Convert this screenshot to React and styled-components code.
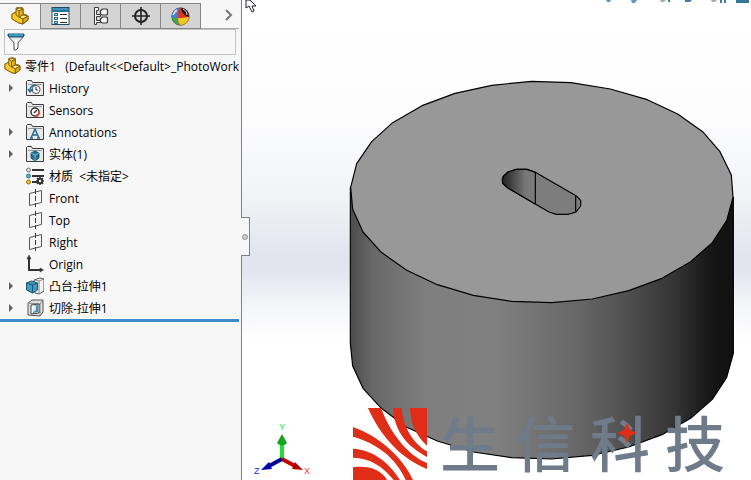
import React from 'react'
import styled, { createGlobalStyle } from 'styled-components'

const line = '#3c3c3c'

const GlobalStyle = createGlobalStyle`
  * {
    box-sizing: border-box;
  }
  body {
    margin: 0;
    overflow: hidden;
    font-family: 'Open Sans', 'Noto Sans CJK SC', sans-serif;
    font-size: 12px;
    color: #000;
  }
`

const Window = styled.main`
  display: flex;
  min-height: 100vh;
`

const Panel = styled.aside`
  position: relative;
  z-index: 1;
  flex: 0 0 242px;
  min-width: 0;
  padding: 3px 2px 0 0;
  border-right: 1px solid #808080;
  background: #f7f7f7;
`

const Tabs = styled.nav`
  display: flex;
  height: 26px;
`

const Tab = styled.button`
  display: flex;
  align-items: center;
  justify-content: center;
  width: ${p => (p.$last ? '41px' : '40px')};
  padding: 0;
  border: 1px solid #858585;
  border-left-width: ${p => (p.$active ? '0' : '1px')};
  border-right-width: ${p => (p.$last ? '1px' : '0')};
  border-bottom-color: ${p => (p.$active ? '#f7f7f7' : '#858585')};
  background: ${p => (p.$active ? '#f7f7f7' : '#d4d4d4')};
`

const More = styled.button`
  display: flex;
  flex: 1;
  align-items: center;
  justify-content: flex-end;
  padding: 0 6px 2px 0;
  border: 0;
  border-bottom: 1px solid #a8a8a8;
  background: none;
`

const Filter = styled.label`
  display: flex;
  align-items: center;
  height: 26px;
  margin: 0 3px 0 4px;
  padding-left: 2px;
  border: 1px solid #c2c2c2;
`

const FilterInput = styled.input`
  flex: 1;
  min-width: 0;
  border: 0;
  outline: 0;
  background: none;
  font: inherit;
`

const Tree = styled.ul`
  margin: 0;
  padding: 0;
  border-bottom: 3px solid #3a8cc6;
  list-style: none;
`

const Row = styled.li`
  display: flex;
  align-items: center;
  height: 22px;
  padding-left: 4px;
  overflow: hidden;
  white-space: pre;
`

const Toggle = styled.button`
  display: flex;
  align-items: center;
  flex: 0 0 22px;
  height: 22px;
  padding: 0 0 0 4px;
  border: 0;
  background: none;
`

const Spacer = styled.span`
  flex: 0 0 22px;
`

const Label = styled.span`
  margin-left: ${p => (p.$root ? '4px' : '5px')};
`

const Handle = styled.button`
  position: absolute;
  top: 217px;
  right: -9px;
  display: flex;
  align-items: center;
  justify-content: center;
  width: 9px;
  height: 39px;
  padding: 0;
  border: 1px solid #808080;
  border-left: 0;
  background: #f7f7f7;
`

const Dot = styled.span`
  flex: 0 0 6px;
  height: 6px;
  border: 1px solid #999;
  border-radius: 50%;
  background: #ccc;
`

const Viewport = styled.section`
  position: relative;
  flex: 1;
  min-width: 0;
  overflow: hidden;
  background: linear-gradient(#fff 0%, #fdfdfe 25%, #f0f2f6 42%, #e2e5ee 53%, #e2e5ee 56%, #f5f6fa 64%, #fff 71%);
`

const Scene = styled.svg`
  position: absolute;
  inset: 0;
  width: 100%;
  height: 100%;
`

const Triad = styled.svg`
  position: absolute;
  left: 8px;
  bottom: 0;
`

const Pointer = styled.svg`
  position: absolute;
  left: 3px;
  top: 0;
`

const ViewTools = styled.svg`
  position: absolute;
  right: 0;
  top: 0;
`

const Watermark = styled.div`
  position: absolute;
  right: 26px;
  bottom: 0;
  display: flex;
  height: 72px;
`

const Company = styled.div`
  display: flex;
  gap: 15px;
  margin-left: 13px;
  color: #707b8a;
  font-family: Lato, 'Noto Sans CJK SC', sans-serif;
  font-size: 60px;
  font-weight: 500;
  line-height: 72px;
`

const Glyph = styled.span`
  position: relative;
`

const Star = styled.svg`
  position: absolute;
  left: 27px;
  top: 15px;
`

const PartIcon = () => (
  <svg width="18" height="18" viewBox="0 0 18 18" stroke="#7a5a0c" strokeWidth=".9" strokeLinejoin="round">
    <path d="M1 7l4-2v-4l4-1 3 1v6l4 1 1 1v4l-5 4-4-1-7-4z" fill="#f3c22b" />
    <path d="M5 2l4-1 3 1-4 2z" fill="#ffe681" />
    <path d="M8 4l4-2v6l-4 2z" fill="#e5b11e" />
    <path d="M1 7l4-2v3l3 2 4 2v5l-4-1-7-4z" fill="#fbc926" />
    <path d="M8 10l4-2 5 1-5 3z" fill="#ffe681" />
    <path d="M12 12l5-3v4l-5 4z" fill="#dda51b" />
  </svg>
)

const PropertyIcon = () => (
  <svg width="19" height="18" viewBox="0 0 19 18">
    <rect x="1" y=".5" width="17" height="17" fill="#fff" stroke="#28465a" />
    <path d="M1 1h17v4H1z" fill="#237198" />
    <path d="M2 2h15" stroke="#65b3d4" />
    <path d="M3 6h4v3H3zM3 10h4v3H3zM3 14h4v3H3z" fill="#286e92" />
    <path d="M4 7.5h2M4 11.5h2M4 15.5h2" stroke="#b9dfee" />
    <path d="M9 7.5h7M9 11.5h7M9 15.5h7" stroke="#333" />
  </svg>
)

const ConfigIcon = () => (
  <svg width="16" height="18" viewBox="0 0 16 18" fill="#f5f5f5" stroke={line} strokeLinejoin="round">
    <path d="M1.500 .5h4v3h-2v4h4v2h-4v4h4v2h-4v2h-2z" />
    <path d="M7.500 4l2-2h4l1 1v4l-1 1h-4l-2-1zM7.500 12l2-2h4l1 1v4l-1 1h-4l-2-1z" strokeWidth="1.200" />
  </svg>
)

const TargetIcon = () => (
  <svg width="18" height="18" viewBox="0 0 18 18" fill="none" stroke="#222" strokeWidth="2">
    <circle cx="9" cy="9" r="6" />
    <path d="M9 0v18M0 9h18" strokeWidth="1.6" />
  </svg>
)

const AppearanceIcon = () => (
  <svg width="19" height="19" viewBox="0 0 19 19">
    <clipPath id="ball">
      <circle cx="9.500" cy="9.500" r="9" />
    </clipPath>
    <g clipPath="url(#ball)">
      <path d="M0 0h19v19H0z" fill="#e03428" />
      <path d="M0 11C0 4 4 0 10 0 7 3 6 6 7 11z" fill="#3d85d8" />
      <path d="M0 10c3 1 5 1 7 1 0 3 1 6 3 8H0z" fill="#3fa84f" />
      <path d="M7 11c4 0 8 0 12-2v10h-9c-2-2-3-5-3-8z" fill="#f4c61f" />
      <path d="M10 1c5-1 8 4 8 9-4-1-8-4-8-9z" fill="#231718" />
      <path d="M12 2c2 1 4 3 4 6" stroke="#e8e8e8" fill="none" />
      <path d="M2 8c1-3 2-4 4-5" stroke="#c4e0ff" strokeWidth="2" fill="none" />
    </g>
    <circle cx="9.500" cy="9.500" r="8.700" fill="none" stroke="#555" strokeOpacity=".500" />
  </svg>
)

const FunnelIcon = () => (
  <svg width="18" height="18" viewBox="0 0 18 18">
    <path d="M1 3l6 7v7h2l2-2v-5l6-7z" fill="#e8e8e8" stroke="#555" />
    <path d="M9 7v9" stroke="#fff" strokeWidth="2" />
    <path d="M1 1h16v2l-1 1H2L1 3z" fill="#2381a8" stroke="#1a5875" />
    <path d="M2 2h14" stroke="#64bad8" />
  </svg>
)

const folderMarks = {
  history: (
    <g fill="none" stroke="#2a6a8e">
      <circle cx="10" cy="10.500" r="4" fill="#fff" stroke="#555" />
      <path d="M4 12c0-4 2-6 6-6M2 10l2 3 3-3" strokeWidth="1.400" />
      <path d="M10 8v3h2" stroke="#333" />
    </g>
  ),
  sensor: (
    <g fill="none" stroke="#333">
      <circle cx="9" cy="11" r="4" fill="#fff" strokeWidth="1.500" />
      <path d="M13 10a4 4 0 0 1-4 5" stroke="#e0432b" strokeWidth="2" />
      <path d="M8 12l3-3" strokeWidth="1.500" />
    </g>
  ),
  annotation: (
    <path d="M5 15l4-9 4 9M6 12h6M4 15h3M11 15h3" fill="none" stroke="#286b91" strokeWidth="1.500" />
  ),
  body: (
    <g fill="#257194" stroke="#123f57" strokeWidth=".800">
      <path d="M5 8l4-2 4 2v5l-4 3-4-3z" />
      <path d="M5 8l4 2 4-2M9 10v6" fill="none" stroke="#8ec6dd" />
    </g>
  ),
}

const FolderIcon = ({ mark }) => (
  <svg width="18" height="18" viewBox="0 0 18 18">
    <path d="M.5 16.500v-14l1-1h4l1 2h11v13z" fill="#e9e9e9" stroke={line} />
    <path d="M2 5.500h14" stroke="#999" />
    {folderMarks[mark]}
  </svg>
)

const MaterialIcon = () => (
  <svg width="18" height="18" viewBox="0 0 18 18" stroke="#333">
    <path d="M6 3h12M6 9h12M6 15h5" strokeWidth="2" />
    <circle cx="2.500" cy="3" r="2" fill="#ddd" stroke="#777" />
    <circle cx="2.500" cy="9" r="2" fill="#56b2dc" stroke="#37718b" />
    <circle cx="2.500" cy="15" r="2" fill="#f3c321" stroke="#967512" />
    <circle cx="14" cy="14" r="2.200" fill="none" strokeWidth="2" />
    <path d="M14 10v1.500M14 16.500V18M10 14h1.500M16.500 14H18M11 11l1 1M16 16l1 1M17 11l-1 1M11 17l1-1" strokeWidth="1.500" />
  </svg>
)

const PlaneIcon = () => (
  <svg width="18" height="18" viewBox="0 0 18 18" fill="none" stroke="#555">
    <path d="M3.500 4.500l12-3v12l-12 3z" />
    <path d="M9.500 0v18" strokeDasharray="5 2" stroke={line} />
  </svg>
)

const OriginIcon = () => (
  <svg width="18" height="18" viewBox="0 0 18 18" fill="#333" stroke="#333">
    <path d="M3 3v12h12" fill="none" strokeWidth="2" />
    <path d="M1 4l2-4 2 4zM14 13l3.500 2-3.500 2z" strokeWidth=".500" />
  </svg>
)

const ExtrudeIcon = () => (
  <svg width="18" height="18" viewBox="0 0 18 18" strokeLinejoin="round">
    <path d="M8 3l6-2 4 1v12l-5 3-4-1z" fill="#f4f4f4" stroke="#555" />
    <path d="M13 4l5-2M13 4v13M9 3l4 1" stroke="#888" />
    <path d="M.500 6l5-2 6 2v7l-5 3-6-3z" fill="#439bc1" stroke="#1d5671" />
    <path d="M.500 6l6 2 5-2M6.500 8v8" fill="none" stroke="#1d5671" />
  </svg>
)

const CutIcon = () => (
  <svg width="18" height="18" viewBox="0 0 18 18" strokeLinejoin="round">
    <path d="M2 4l4-3h11v12l-3 4-12-1z" fill="#e0e0e0" stroke="#555" />
    <path d="M2 4l12 1v12M14 5l3-4" fill="none" stroke="#888" />
    <path d="M5 6l8-1v9l-8 1z" fill="#fff" stroke="#444" />
    <path d="M7 7l5-1v7l-5 1z" fill="#3a95bd" />
    <path d="M7 7h3v4l-3 2z" fill="#d9eef6" />
  </svg>
)

const tabs = [
  { title: 'Feature tree', icon: <PartIcon /> },
  { title: 'Properties', icon: <PropertyIcon /> },
  { title: 'Configurations', icon: <ConfigIcon /> },
  { title: 'Dimensions', icon: <TargetIcon /> },
  { title: 'Appearances', icon: <AppearanceIcon /> },
]

const features = [
  { name: 'History', icon: <FolderIcon mark="history" />, children: true },
  { name: 'Sensors', icon: <FolderIcon mark="sensor" /> },
  { name: 'Annotations', icon: <FolderIcon mark="annotation" />, children: true },
  { name: '实体(1)', icon: <FolderIcon mark="body" />, children: true },
  { name: '材质  <未指定>', icon: <MaterialIcon /> },
  { name: 'Front', icon: <PlaneIcon /> },
  { name: 'Top', icon: <PlaneIcon /> },
  { name: 'Right', icon: <PlaneIcon /> },
  { name: 'Origin', icon: <OriginIcon /> },
  { name: '凸台-拉伸1', icon: <ExtrudeIcon />, children: true },
  { name: '切除-拉伸1', icon: <CutIcon />, children: true },
]

const FeaturePanel = () => (
  <Panel>
    <Tabs>
      {tabs.map((tab, i) => (
        <Tab key={tab.title} aria-label={tab.title} $active={i === 0} $last={i === tabs.length - 1}>
          {tab.icon}
        </Tab>
      ))}
      <More aria-label="More tabs">
        <svg width="8" height="12" viewBox="0 0 8 12" fill="none" stroke="#777" strokeWidth="2">
          <path d="M1 1l5 5-5 5" />
        </svg>
      </More>
    </Tabs>
    <Filter>
      <FunnelIcon />
      <FilterInput aria-label="Filter" />
    </Filter>
    <Tree>
      <Row>
        <PartIcon />
        <Label $root>零件1   (Default&lt;&lt;Default&gt;_PhotoWork</Label>
      </Row>
      {features.map(f => (
        <Row key={f.name}>
          {f.children ? (
            <Toggle aria-label={`Expand ${f.name}`}>
              <svg width="6" height="8" viewBox="0 0 6 8">
                <path d="M1 0l4 4-4 4z" fill="#606060" />
              </svg>
            </Toggle>
          ) : (
            <Spacer />
          )}
          {f.icon}
          <Label>{f.name}</Label>
        </Row>
      ))}
    </Tree>
    <Handle aria-label="Collapse panel">
      <Dot />
    </Handle>
  </Panel>
)

const Model = () => (
  <Scene viewBox="-294 -210 1527 1440" preserveAspectRatio="xMaxYMax meet">
    <defs>
      <linearGradient id="side">
        <stop offset="0" stopColor="#4c4c4c" />
        <stop offset=".06" stopColor="#686868" />
        <stop offset=".2" stopColor="#7f7f7f" />
        <stop offset=".38" stopColor="#808080" />
        <stop offset=".5" stopColor="#727272" />
        <stop offset=".6" stopColor="#666" />
        <stop offset=".72" stopColor="#505050" />
        <stop offset=".85" stopColor="#333" />
        <stop offset=".95" stopColor="#141414" />
        <stop offset="1" stopColor="#111" />
      </linearGradient>
      <linearGradient id="slot">
        <stop offset="0" stopColor="#222" />
        <stop offset=".7" stopColor="#777" />
        <stop offset="1" stopColor="#7c7c7c" />
      </linearGradient>
    </defs>
    <g stroke="#000" strokeWidth="3.500" strokeLinejoin="round">
      <path
        d="M31 352V820L38 888L69 955L124 1015L200 1072L292 1113L400 1146L515 1163L635 1167L757 1156L866 1131L966 1094L1052 1045L1117 988L1160 922L1180 850V382z"
        fill="url(#side)"
      />
      <path
        d="M32 352L50 281L95 215L158 158L246 107L345 70L455 46L575 34L693 38L811 57L922 89L1013 132L1088 185L1140 245L1174 315L1179 382L1160 452L1117 518L1052 575L966 625L866 662L757 687L635 698L515 694L400 676L292 644L200 601L124 547L69 486L38 418z"
        fill="#989898"
      />
      <path
        d="M487 328L490 319L504 306L529 298H561L586 307L708 377L722 391V408L708 426L684 433H649L627 426L504 354L488 340z"
        fill="#7d7d7d"
      />
      <path d="M487 328L490 319L504 306L529 298H561L586 307V402L504 354L488 340z" fill="url(#slot)" />
      <path d="M707 377V425" />
    </g>
  </Scene>
)

const Axes = () => (
  <Triad width="64" height="60" viewBox="0 0 64 60" fontSize="9" fontFamily="Liberation Sans, sans-serif">
    <path d="M32 39V24" stroke="#22dd33" strokeWidth="4" />
    <path d="M27 23l5-9 5 9c-2 3-8 3-10 0z" fill="#16a51f" />
    <path d="M32 39l13 7" stroke="#c50000" strokeWidth="4" />
    <path d="M45 42l8 8-11-1z" fill="#b10000" />
    <path d="M32 39l-13 7" stroke="#00008c" strokeWidth="4" />
    <path d="M19 42l-8 8 11-1z" fill="#0000a8" />
    <text x="29" y="10" fill="#2fe02f">Y</text>
    <text x="54" y="54" fill="#f33">X</text>
    <text x="4" y="54" fill="#22f">Z</text>
  </Triad>
)

const App = () => (
  <>
    <GlobalStyle />
    <Window>
      <FeaturePanel />
      <Viewport>
        <Model />
        <Axes />
        <Pointer width="12" height="13" viewBox="0 0 12 13">
          <path d="M1 0v8l3-2 3 6 2-1-2-5h4L5 0z" fill="#fff" stroke="#1c1c30" />
        </Pointer>
        <ViewTools width="161" height="4" viewBox="0 0 161 4">
          <path d="M16 0h5l-1 2h-3zM41 0h6l-2 3h-3z" fill="#5d9dc2" />
          <path d="M70 0h6l-2 2h-3zM121 0h6l-2 2h-3z" fill="#aaa" />
          <path d="M78 0h2v2h-2zM95 0h7l-2 2h-5zM130 0h2v3h-2zM134 0h2v3h-2z" fill="#3f7e9f" />
          <path d="M146 0h13v3h-13z" fill="#377596" />
        </ViewTools>
        <Watermark>
          <svg width="74" height="72" viewBox="0 0 222 216" fill="#e02d17">
            <path d="M45 0H84C110 70 160 140 222 165V183C140 150 80 80 45 0z" />
            <path d="M120 0H146C150 60 185 110 222 130V147C165 115 125 75 120 0z" />
            <path d="M171 0H222V113C185 80 172 40 171 0z" />
            <path d="M0 57C80 85 150 150 180 216H158C130 150 70 105 0 86z" />
            <path d="M0 122C60 125 110 165 141 216H122C90 175 50 150 0 149z" />
            <path d="M0 178C45 172 85 185 102 216H0z" />
          </svg>
          <Company>
            <Glyph>生</Glyph>
            <Glyph>信</Glyph>
            <Glyph>
              科
              <Star width="20" height="20" viewBox="0 0 20 20">
                <path d="M10 0l3 7 7 3-7 3-3 7-3-7-7-3 7-3z" fill="#e02d17" />
              </Star>
            </Glyph>
            <Glyph>技</Glyph>
          </Company>
        </Watermark>
      </Viewport>
    </Window>
  </>
)

export default App
